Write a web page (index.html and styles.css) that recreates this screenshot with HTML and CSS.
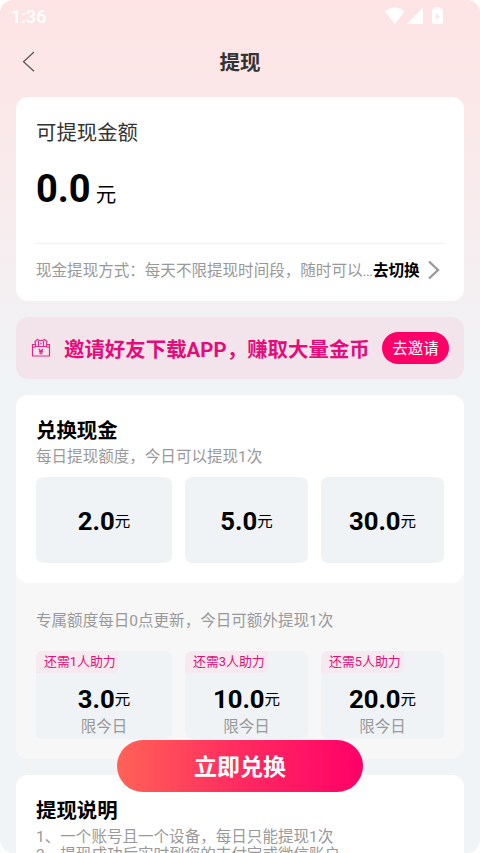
FILE: index.html
```html
<!DOCTYPE html>
<html lang="zh-CN">
<head>
<meta charset="utf-8">
<title>提现</title>
<link rel="stylesheet" href="styles.css">
</head>
<body>
<div class="screen">
  <div class="status">
    <span class="time">1:36</span>
    <svg class="status-icons" width="60" height="18" viewBox="0 0 60 18" fill="#fff">
      <path d="M0 4.500C5-.8 14-.8 19.500 4.500L9.800 17Z"/>
      <path d="M38 1v16H22Z"/>
      <path fill-rule="evenodd" d="M49 1.500h1.500V0h4v1.500H56q2 0 2 2V15q0 2-2 2h-7q-2 0-2-2V3.500q0-2 2-2Zm4 4-3.200 4.500h2v3.500L55 9h-2Z"/>
    </svg>
  </div>
  <header class="nav">
    <svg class="back" width="13" height="22" viewBox="0 0 13 22" fill="none" stroke="#5c5152" stroke-width="1.200"><path d="M12 1 1.500 10.700 12 20.200"/></svg>
    <h1>提现</h1>
  </header>
  <main>
    <section class="card balance">
      <div class="label">可提现金额</div>
      <div class="total"><b>0.0</b><span>元</span></div>
      <div class="method">
        <span class="method-text">现金提现方式：每天不限提现时间段，随时可以…</span>
        <b>去切换</b>
        <svg width="12" height="20" viewBox="0 0 12 20" fill="none" stroke="#999" stroke-width="2.400"><path d="M1 1.500 10 10 1 18.500"/></svg>
      </div>
    </section>
    <section class="invite">
      <svg class="gift" width="20" height="20" viewBox="0 0 20 20" fill="none" stroke="#e62687" stroke-width="1.200">
        <path d="M4 6.500H1.500V18h17V6.500H16M4.500 9.500V6.500L4 3.500 6.500 1.500 8.500 2.500h3l2-1 2.500 2-.5 3v3M1.500 9.500 5 8.500h10l3.500 1M7.500 3v5.500M12.500 3v5.500M10 4.500v2"/>
        <path d="m8 11 2 2.300L12 11M10 13v3.500M8 13.400h4M8 15h4"/>
      </svg>
      <strong>邀请好友下载APP，赚取大量金币</strong>
      <span class="invite-btn">去邀请</span>
    </section>
    <section class="exchange">
      <div class="card daily">
        <h2>兑换现金</h2>
        <p class="note">每日提现额度，今日可以提现1次</p>
        <div class="options">
          <div class="option"><div class="amount"><b>2.0</b><span>元</span></div></div>
          <div class="option"><div class="amount"><b>5.0</b><span>元</span></div></div>
          <div class="option"><div class="amount"><b>30.0</b><span>元</span></div></div>
        </div>
      </div>
      <div class="special">
        <p class="note">专属额度每日0点更新，今日可额外提现1次</p>
        <div class="options">
          <div class="option"><span class="tag">还需1人助力</span><div class="amount"><b>3.0</b><span>元</span></div><span class="limit">限今日</span></div>
          <div class="option"><span class="tag">还需3人助力</span><div class="amount"><b>10.0</b><span>元</span></div><span class="limit">限今日</span></div>
          <div class="option"><span class="tag">还需5人助力</span><div class="amount"><b>20.0</b><span>元</span></div><span class="limit">限今日</span></div>
        </div>
      </div>
    </section>
    <section class="card rules">
      <h2>提现说明</h2>
      <p>1、一个账号且一个设备，每日只能提现1次</p>
      <p>2、提现成功后实时到您的支付宝或微信账户</p>
    </section>
  </main>
  <div class="submit">立即兑换</div>
</div>
</body>
</html>
```

FILE: styles.css
```css
* { box-sizing: border-box; }
body { margin: 0; background: #fff; font-family: Roboto, "Noto Sans CJK SC", sans-serif; color: #000; }
h1, h2, p { margin: 0; }
svg { display: block; flex: none; }
.screen {
  position: relative;
  width: 480px;
  height: 853px;
  overflow: hidden;
  border-radius: 13px;
  background: linear-gradient(#fee4e4 0, #fbe7e8 100px, #f0f4f7 400px);
}
.status { display: flex; justify-content: space-between; height: 32px; padding: 7px 35px 0 11px; }
.time { font-size: 18px; line-height: 20px; font-weight: 500; color: #fff; }
.nav { display: flex; align-items: center; height: 60px; padding: 0 22px; }
.nav h1 { flex: 1; margin-right: 13px; padding-top: 2px; text-align: center; font-size: 20.500px; line-height: 30px; color: #333; }
main { padding: 5px 16px 0; }
.card { background: #fff; border-radius: 12px; }
.balance { height: 204px; padding: 21px 20px 0; }
.label { height: 30px; font-size: 20.400px; line-height: 30px; color: #333; }
.total { display: flex; align-items: baseline; height: 95px; padding-top: 18px; }
.total b { font-size: 38px; line-height: 46px; }
.total span { margin-left: 5px; font-size: 20.500px; line-height: 30px; }
.method { display: flex; align-items: center; height: 52px; border-top: 1px solid #f2f2f2; font-size: 15.550px; }
.method-text { width: 337px; color: #999; white-space: nowrap; }
.method-text, .method b { margin-top: -1px; }
.method svg { margin-left: 8px; }
.invite { display: flex; align-items: center; height: 62px; margin-top: 16px; padding: 0 15px; border-radius: 12px; background: #f3e4ec; }
.invite strong { width: 318px; margin-left: 13px; padding-top: 3px; font-size: 20.450px; line-height: 30px; color: #e70b79; white-space: nowrap; }
.invite-btn { width: 67px; height: 32px; padding-top: 1px; border-radius: 16px; background: #ff0068; color: #fff; font-size: 15.500px; line-height: 32px; text-align: center; }
.exchange { height: 364px; margin-top: 16px; border-radius: 12px; background: #f7f7f7; }
.daily { height: 188px; padding: 21px 20px 0; }
h2 { font-size: 20.400px; line-height: 30px; }
.note { font-size: 15.550px; line-height: 23px; color: #999; }
.daily .note { padding-top: 0; }
.options { display: grid; grid-template-columns: 136px 123px 123px; gap: 13px; }
.option { display: flex; flex-direction: column; align-items: center; border-radius: 7px; background: #f0f3f6; }
.daily .options { margin-top: 8px; }
.daily .option { height: 86px; padding-top: 1px; justify-content: center; }
.amount { display: flex; align-items: center; font-size: 15.500px; line-height: 30px; }
.amount b { font-size: 25.700px; }
.amount span { margin-top: 2px; }
.special { padding: 27px 20px 0; }
.special .options { margin-top: 18px; }
.special .option { height: 88px; }
.tag { align-self: flex-start; width: 83px; height: 22px; padding: 0 0 0 8px; border-radius: 7px 0 7px 0; background: #f7e9f0; color: #e01077; font-size: 12.900px; line-height: 22px; }
.special .amount { height: 30px; margin-top: 11px; }
.limit { margin-top: 2px; font-size: 15.500px; line-height: 23px; color: #999; }
.rules { height: 120px; margin-top: 16px; padding: 21px 20px 0; }
.rules p { font-size: 15.550px; line-height: 18px; color: #999; }
.rules h2 + p { margin-top: 2px; }
.submit {
  position: absolute;
  left: 117px;
  top: 740px;
  width: 246px;
  height: 52px;
  padding-top: 2px;
  border-radius: 26px;
  background: linear-gradient(90deg, #ff6257, #ff2b60 50%, #ff0068);
  color: #fff;
  font-size: 23px;
  font-weight: 700;
  line-height: 52px;
  text-align: center;
}
```
